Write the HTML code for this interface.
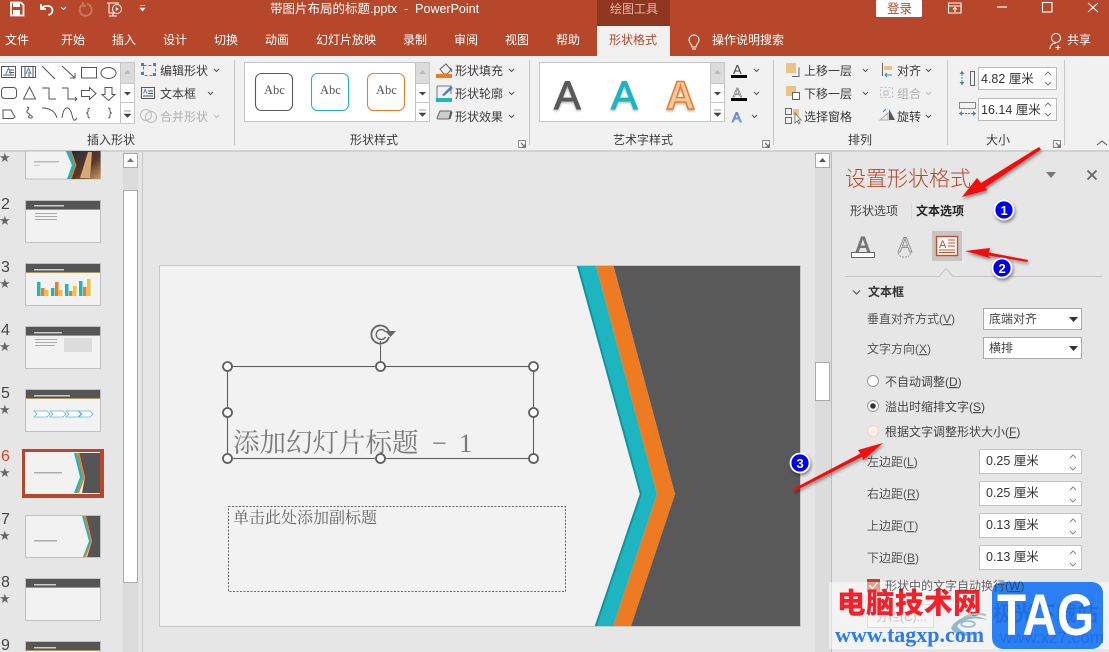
<!DOCTYPE html>
<html lang="zh"><head><meta charset="utf-8"><title>PowerPoint</title>
<style>
html,body{margin:0;padding:0;background:#e6e6e6;width:1109px;height:652px;overflow:hidden}
svg{display:block;position:absolute;left:0;top:0}
text{font-family:"Liberation Sans","Noto Sans CJK SC",sans-serif;font-size:12px;fill:#3a3a3a}
.w{fill:#fff}.g{fill:#b0b0b0}.p{fill:#555}
.ic{fill:none;stroke:#555;stroke-width:1}
.n{font-size:16px;fill:#444}
.s{font-family:"DejaVu Sans",sans-serif;font-size:13px;fill:#666}
</style></head><body>
<svg width="1109" height="652" viewBox="0 0 1109 652" xmlns="http://www.w3.org/2000/svg">
<defs>
<filter id="sh" x="-20%" y="-40%" width="140%" height="180%"><feDropShadow dx="1" dy="2" stdDeviation="1.5" flood-color="#000" flood-opacity=".45"/></filter>
<filter id="bl" x="-10%" y="-10%" width="120%" height="120%"><feDropShadow dx="0" dy="1.500" stdDeviation="1" flood-color="#000" flood-opacity=".3"/></filter>
<linearGradient id="ph" x1="0" x2="1" y1="0" y2="1"><stop offset="0" stop-color="#1c2a44"/><stop offset=".6" stop-color="#5a3a26"/><stop offset="1" stop-color="#c99a6a"/></linearGradient>
</defs>
<rect width="1109" height="652" fill="#e6e6e6"/>
<!-- title bar -->
<rect width="1109" height="56" fill="#b7472a"/>
<rect x="597" width="73" height="26" fill="#8f3620"/>
<rect x="597" y="26" width="73" height="30" fill="#f1f1f1"/>
<!-- QAT -->
<path d="M11 2.500h10l2.500 2.500v10.500h-12.500z" fill="none" stroke="#fff" stroke-width="1.800"/><rect x="13" y="3" width="7" height="4" fill="#fff"/><rect x="13" y="10" width="7" height="5" fill="#fff"/>
<path d="M41 4v5h5M41.500 8.500c3-4 11-3.500 11 2 0 2.500-2 4-4 4.500" fill="none" stroke="#fff" stroke-width="1.800"/>
<path d="M61 7l2.500 2.500L66 7" fill="none" stroke="#fff"/>
<path d="M83 4.500a6 6 0 1 0 4-.5M83 2v4h3" fill="none" stroke="#c97a63" stroke-width="1.800"/>
<path d="M107 3h12M109 3v10h8M113 13v3M109 16h8" fill="none" stroke="#fff"/><circle cx="117" cy="9" r="4.500" fill="#b7472a" stroke="#fff"/><path d="M115.800 7v4l3-2z" fill="#fff"/>
<path d="M140 5.500h5M140 8l2.500 3 2.500-3z" fill="#fff" stroke="#fff" stroke-width=".6"/>
<text x="270" y="13" class="w" style="font-size:12.500px">带图片布局的标题.pptx&#160;&#160;-&#160;&#160;PowerPoint</text>
<text x="610" y="13" style="font-size:12px;fill:#e6b9a8">绘图工具</text>
<rect x="876" y="0" width="46" height="17" fill="#fff" rx="1"/><text x="887" y="13" style="fill:#b7472a;font-size:12.500px">登录</text>
<path d="M948.500 3h12.500v10h-12.500zM948.500 6h12.500M955 12V8M953 9.500l2-2 2 2" fill="none" stroke="#fff" stroke-width="1.100"/>
<path d="M997 7h10" stroke="#fff" stroke-width="1.200"/>
<rect x="1042.500" y="2.500" width="9.500" height="9.500" fill="none" stroke="#fff" stroke-width="1.100"/>
<path d="M1088 3l10 9M1098 3l-10 9" stroke="#fff" stroke-width="1.100"/>
<!-- tabs -->
<g>
<text x="5" y="44" class="w">文件</text><text x="61" y="44" class="w">开始</text><text x="112" y="44" class="w">插入</text><text x="163" y="44" class="w">设计</text><text x="214" y="44" class="w">切换</text><text x="265" y="44" class="w">动画</text><text x="316" y="44" class="w">幻灯片放映</text><text x="403" y="44" class="w">录制</text><text x="454" y="44" class="w">审阅</text><text x="505" y="44" class="w">视图</text><text x="556" y="44" class="w">帮助</text>
<text x="609" y="44" style="fill:#b7472a">形状格式</text>
<path d="M692 47c0-3-3-3.500-3-7a5 5 0 0 1 10 0c0 3.500-3 4-3 7zM692 49h4" fill="none" stroke="#fff"/>
<text x="712" y="44" class="w">操作说明搜索</text>
<circle cx="1056" cy="38" r="4.500" fill="none" stroke="#fff"/><path d="M1050 49c0-4 3-6 6-6M1058 45v5M1055.500 47.500h5" fill="none" stroke="#fff"/>
<text x="1067" y="44" class="w">共享</text>
</g>
<!-- ribbon -->
<rect y="56" width="1109" height="94" fill="#f1f1f1"/>
<rect y="150" width="1109" height="2" fill="#d2d2d2"/>
<path d="M234.500 60v85M529.500 60v85M773.500 60v85M947.500 60v85M1064.500 60v85" stroke="#c6c6c6"/>
<!-- shapes gallery -->
<rect x="-2" y="62.500" width="136" height="61" fill="#fff" stroke="#c6c6c6"/>
<rect x="120.500" y="62.500" width="14" height="21" fill="#dcdcdc" stroke="#c6c6c6"/><rect x="120.500" y="83.500" width="14" height="19" fill="#fff" stroke="#c6c6c6"/><rect x="120.500" y="102.500" width="14" height="21" fill="#fff" stroke="#c6c6c6"/>
<path d="M124 74l3.500-4 3.500 4z" fill="#bbb"/><path d="M124 92l3.500 3.500 3.500-3.500z" fill="#444"/><path d="M124 111h7M124 114l3.500 3.500 3.500-3.500z" fill="#444" stroke="#444" stroke-width=".5"/>
<g class="ic">
<rect x="1.500" y="66.500" width="14" height="11"/><path d="M9 70h5M9 72.500h5M3 75h11"/>
<rect x="21.500" y="66.500" width="14" height="11"/><path d="M25 67v10M29 72v5M33 67v10"/>
<path d="M42 66l13 13M62 66l13 12M75 73v5h-5"/><rect x="81.500" y="67.500" width="15" height="10.500"/><ellipse cx="108.500" cy="73" rx="7.500" ry="5.500"/>
<rect x="1.500" y="87.500" width="15" height="11" rx="3"/><path d="M29.500 87l6 12h-12zM42 88h7v11h7M62 88h6v11h9M75 97l2 2-2 2M81.500 90.500h8v-3l6.500 6-6.500 6v-3h-8zM105 87.500h7v7h3l-6.500 6-6.500-6h3z"/>
<path d="M3 110h8l4 7-2 1.500h-10z"/><path d="M27 107c5 1-3 4 1 6s-2 4 2 5 2-3 0-3"/><path d="M42 108c8 0 13 3 15 10M62 118c2-14 8-12 10-3s4 4 5 3"/>
<path d="M90 108c-2 0-2 1-2 3s-1 2-2 2c1 0 2 0 2 2s0 3 2 3M108 108c2 0 2 1 2 3s1 2 2 2c-1 0-2 0-2 2s0 3-2 3"/>
</g>
<path d="M6 74l2.500-6 2.500 6M26 74l2.500-6 2.500 6" fill="none" stroke="#4a7ebb"/>
<!-- edit shape stack -->
<rect x="143.500" y="65.500" width="12" height="10" fill="none" stroke="#4a7ebb" stroke-dasharray="3 2"/><rect x="141" y="72" width="3" height="3" fill="#4a7ebb"/><rect x="153" y="63" width="3" height="3" fill="#4a7ebb"/><rect x="141" y="63" width="3" height="3" fill="#4a7ebb"/><rect x="153" y="73" width="3" height="3" fill="#4a7ebb"/>
<text x="160" y="75">编辑形状</text><path d="M214 69l2.500 2.500L219 69" class="ic"/>
<rect x="141.500" y="87.500" width="13" height="11" class="ic"/><path d="M148 91h5M148 93.500h5M143 96h10" class="ic"/><text x="143" y="93.500" style="font-size:6px;fill:#4a7ebb;font-weight:bold">A</text>
<text x="160" y="98">文本框</text><path d="M208 92l2.500 2.500L213 92" class="ic"/>
<circle cx="146" cy="115" r="5.500" fill="none" stroke="#bbb"/><circle cx="151" cy="117" r="5.500" fill="none" stroke="#bbb"/>
<text x="160" y="121" class="g">合并形状</text><path d="M214 115l2.500 2.500L219 115" fill="none" stroke="#bbb"/>
<text x="87" y="144">插入形状</text>
<!-- shape styles -->
<rect x="244.500" y="62.500" width="185" height="59" fill="#fff" stroke="#c6c6c6"/>
<rect x="415.500" y="62.500" width="14" height="21" fill="#dcdcdc" stroke="#c6c6c6"/><rect x="415.500" y="83.500" width="14" height="19" fill="#fff" stroke="#c6c6c6"/><rect x="415.500" y="102.500" width="14" height="19" fill="#fff" stroke="#c6c6c6"/>
<path d="M419 74l3.500-4 3.500 4z" fill="#bbb"/><path d="M419 92l3.500 3.500 3.500-3.500z" fill="#444"/><path d="M419 110h7M419 113l3.500 3.500 3.500-3.500z" fill="#444" stroke="#444" stroke-width=".5"/>
<rect x="255.500" y="73.500" width="37" height="37" rx="6" fill="#fff" stroke="#595959" stroke-width="1.100"/>
<rect x="311.500" y="73.500" width="37" height="37" rx="6" fill="#fff" stroke="#1db5c0" stroke-width="1.100"/>
<rect x="367.500" y="73.500" width="37" height="37" rx="6" fill="#fff" stroke="#ee7b22" stroke-width="1.100"/>
<text x="264" y="94" style="font-family:'Liberation Serif',serif;font-size:12.500px;fill:#555">Abc</text><text x="320" y="94" style="font-family:'Liberation Serif',serif;font-size:12.500px;fill:#555">Abc</text><text x="376" y="94" style="font-family:'Liberation Serif',serif;font-size:12.500px;fill:#555">Abc</text>
<path d="M440 69l6-5 5 6-4 4h-3zM450 68c2 1 2 3 1.500 4" fill="none" stroke="#666"/><rect x="436" y="74" width="16" height="4" fill="#ee7b22"/>
<text x="455" y="75">形状填充</text><path d="M509 69l2.500 2.500L514 69" class="ic"/>
<path d="M437 86h14v8M437 86v12" fill="none" stroke="#777"/><path d="M442 95l9-9 2 2-9 8z" fill="#4a7ebb"/><rect x="436" y="98" width="16" height="4" fill="#1db5c0"/>
<text x="455" y="98">形状轮廓</text><path d="M509 92l2.500 2.500L514 92" class="ic"/>
<path d="M437 118l3-7h11l-2 8h-11z" fill="#ccc" stroke="#666"/><path d="M449 119l2-8 1.500 1-2 7z" fill="#555"/>
<text x="455" y="121">形状效果</text><path d="M509 115l2.500 2.500L514 115" class="ic"/>
<text x="350" y="144">形状样式</text>
<rect x="518.500" y="140.500" width="7" height="7" fill="none" stroke="#888"/><path d="M521 143l4 4M525 144v3h-3" fill="none" stroke="#666"/>
<!-- wordart -->
<rect x="539.500" y="62.500" width="185" height="59" fill="#fff" stroke="#c6c6c6"/>
<rect x="710.500" y="62.500" width="14" height="21" fill="#dcdcdc" stroke="#c6c6c6"/><rect x="710.500" y="83.500" width="14" height="19" fill="#fff" stroke="#c6c6c6"/><rect x="710.500" y="102.500" width="14" height="19" fill="#fff" stroke="#c6c6c6"/>
<path d="M714 74l3.500-4 3.500 4z" fill="#bbb"/><path d="M714 92l3.500 3.500 3.500-3.500z" fill="#444"/><path d="M714 110h7M714 113l3.500 3.500 3.500-3.500z" fill="#444" stroke="#444" stroke-width=".5"/>
<text x="554" y="109" filter="url(#bl)" style="font-size:40px;fill:#595959;stroke:#595959;stroke-width:1px">A</text>
<text x="611" y="109" filter="url(#bl)" style="font-size:40px;fill:#1db5c0;stroke:#1db5c0;stroke-width:1px">A</text>
<text x="666" y="109" filter="url(#bl)" style="font-size:40px;font-weight:bold;fill:#f6c9a5;stroke:#ee7b22;stroke-width:1.500px" textLength="29" lengthAdjust="spacingAndGlyphs">A</text>
<text x="733" y="74" style="font-size:13px;fill:#444">A</text><rect x="731" y="75" width="16" height="3" fill="#000"/>
<text x="733" y="97" style="font-size:13px;fill:#fff;stroke:#666;stroke-width:.6px">A</text><rect x="731" y="98" width="16" height="3" fill="#000"/>
<text x="732" y="122" style="font-size:14px;fill:#dbe6f5;stroke:#4a7ebb;stroke-width:.8px">A</text>
<path d="M754 69l2.500 2.500L759 69M754 92l2.500 2.500L759 92M752 115l2.500 2.500L757 115" class="ic"/>
<text x="613" y="144">艺术字样式</text>
<rect x="762.500" y="140.500" width="7" height="7" fill="none" stroke="#888"/><path d="M765 143l4 4M769 144v3h-3" fill="none" stroke="#666"/>
<!-- arrange -->
<rect x="786" y="63" width="10" height="10" fill="#e8c487"/><path d="M792 76.500h7v-9" fill="none" stroke="#666"/>
<text x="804" y="75">上移一层</text><path d="M863 69l2.500 2.500L868 69" class="ic"/>
<rect x="786" y="86" width="10" height="10" fill="#e8c487"/><rect x="792.500" y="92.500" width="7" height="7" fill="#fff" stroke="#666"/>
<text x="804" y="98">下移一层</text><path d="M863 92l2.500 2.500L868 92" class="ic"/>
<rect x="785.500" y="108.500" width="6" height="6" fill="none" stroke="#666"/><rect x="785.500" y="117.500" width="6" height="6" fill="none" stroke="#666"/><rect x="793" y="109" width="6" height="6" fill="#e8c487"/><path d="M795 113v10l2-2 2 3 1-1-2-3h3z" fill="#fff" stroke="#666" stroke-width=".8"/>
<text x="804" y="121">选择窗格</text>
<path d="M882.500 63v13" stroke="#666"/><rect x="884" y="66" width="8" height="4" fill="#e8c487"/><path d="M892 75h-7M887 73l-2 2 2 2" fill="none" stroke="#4a7ebb"/>
<text x="897" y="75">对齐</text><path d="M926 69l2.500 2.500L931 69" class="ic"/>
<g fill="none" stroke="#bbb"><rect x="880.500" y="87.500" width="12" height="10" stroke-dasharray="2 2"/><path d="M884 91h4v4h-4z"/></g>
<text x="897" y="98" class="g">组合</text><path d="M926 92l2.500 2.500L931 92" fill="none" stroke="#bbb"/>
<path d="M880 120l8-7v7z" fill="#eee" stroke="#aaa"/><path d="M889 120v-11l6 11z" fill="#555"/><path d="M883 112l3-3" stroke="#4a7ebb"/>
<text x="897" y="121">旋转</text><path d="M926 115l2.500 2.500L931 115" class="ic"/>
<text x="848" y="144">排列</text>
<rect x="1053.500" y="140.500" width="7" height="7" fill="none" stroke="#888"/><path d="M1056 143l4 4M1060 144v3h-3" fill="none" stroke="#666"/>
<!-- size -->
<rect x="970.500" y="71.500" width="4" height="14" fill="none" stroke="#666"/><path d="M962 71v14" stroke="#4a7ebb" stroke-dasharray="2 1"/><path d="M959.500 74l2.500-3 2.500 3zM959.500 82l2.500 3 2.500-3z" fill="#4a7ebb"/>
<rect x="978.500" y="67.500" width="78" height="22" fill="#fff" stroke="#bbb"/>
<text x="981" y="83" style="font-size:12.500px;fill:#333">4.82 厘米</text>
<path d="M1045 75l3-3 3 3M1045 82l3 3 3-3" fill="none" stroke="#777"/>
<rect x="959.500" y="102.500" width="16" height="6" fill="none" stroke="#888"/><path d="M959 113.500h17" stroke="#4a7ebb" stroke-dasharray="2 1"/><path d="M962 111l-3 2.500 3 2.500zM973 111l3 2.500-3 2.500z" fill="#4a7ebb"/>
<rect x="978.500" y="98.500" width="78" height="22" fill="#fff" stroke="#bbb"/>
<text x="981" y="114" style="font-size:12.500px;fill:#333">16.14 厘米</text>
<path d="M1045 106l3-3 3 3M1045 113l3 3 3-3" fill="none" stroke="#777"/>
<text x="986" y="144">大小</text>
<path d="M1097 145l5-4 5 4" fill="none" stroke="#555"/>
<!-- left panel -->
<rect x="123" y="152" width="15" height="500" fill="#dcdcdc"/>
<rect x="123.500" y="153.500" width="14" height="14" fill="#fff" stroke="#aaa"/><path d="M127 162l3.500-4 3.500 4z" fill="#777"/>
<rect x="123.500" y="190.500" width="14" height="392" fill="#fff" stroke="#aaa"/>
<path d="M142.500 152v500" stroke="#c8c8c8"/>
<!-- thumbnails -->
<g>
<rect x="25.500" y="151" width="75" height="28" fill="#f2f2f2" stroke="#c0c0c0"/>
<path d="M66 151h34.500v28H68l4-14z" fill="url(#ph)"/><path d="M80 178l8-26h4l-2 26z" fill="#d9a877"/><path d="M66 151h4l5 14-5 14h-3l5-14z" fill="#1db5c0"/><path d="M70 151h1.500l5 14-5 14H70l5-14z" fill="#ee7b22"/>
<rect x="34" y="161" width="25" height="1.500" fill="#bbb"/><rect x="34" y="165" width="6" height="1" fill="#ccc"/>

<rect x="25.500" y="200.500" width="75" height="42" fill="#f2f2f2" stroke="#c0c0c0"/><rect x="26" y="201" width="74" height="8" fill="#555"/><rect x="26" y="209" width="74" height="1" fill="#a89a5e"/><rect x="34" y="205" width="30" height="1.500" fill="#ccc"/>
<rect x="35" y="213" width="22" height="1" fill="#aaa"/><rect x="35" y="216" width="22" height="1" fill="#aaa"/><rect x="35" y="219" width="22" height="1" fill="#aaa"/>

<rect x="25.500" y="263.500" width="75" height="42" fill="#f2f2f2" stroke="#c0c0c0"/><rect x="26" y="264" width="74" height="8" fill="#555"/><rect x="26" y="272" width="74" height="1" fill="#a89a5e"/><rect x="34" y="269" width="30" height="1.500" fill="#ccc"/>
<rect x="37" y="282" width="3.500" height="14" fill="#1db5c0"/><rect x="41" y="288" width="3.500" height="8" fill="#ee7b22"/><rect x="45" y="290" width="3.500" height="6" fill="#f2c230"/>
<rect x="51" y="288" width="3.500" height="8" fill="#1db5c0"/><rect x="55" y="282" width="3.500" height="14" fill="#ee7b22"/><rect x="59" y="290" width="3.500" height="6" fill="#f2c230"/>
<rect x="65" y="284" width="3.500" height="12" fill="#1db5c0"/><rect x="69" y="291" width="3.500" height="5" fill="#ee7b22"/><rect x="73" y="286" width="3.500" height="10" fill="#f2c230"/>
<rect x="79" y="281" width="3.500" height="15" fill="#1db5c0"/><rect x="83" y="287" width="3.500" height="9" fill="#ee7b22"/><rect x="87" y="279" width="3.500" height="17" fill="#f2c230"/>

<rect x="25.500" y="326.500" width="75" height="42" fill="#f2f2f2" stroke="#c0c0c0"/><rect x="26" y="327" width="74" height="8" fill="#555"/><rect x="26" y="335" width="74" height="1" fill="#a89a5e"/><rect x="34" y="332" width="28" height="1.500" fill="#ccc"/>
<rect x="35" y="339" width="22" height="1" fill="#aaa"/><rect x="35" y="342" width="22" height="1" fill="#aaa"/><rect x="35" y="345" width="20" height="1" fill="#aaa"/><rect x="64" y="338" width="28" height="14" fill="#dcdcdc"/>

<rect x="25.500" y="389.500" width="75" height="42" fill="#f2f2f2" stroke="#c0c0c0"/><rect x="26" y="390" width="74" height="8" fill="#555"/><rect x="26" y="398" width="74" height="1" fill="#a89a5e"/><rect x="34" y="395" width="36" height="1.500" fill="#ccc"/>
<path d="M34 411h13l3 3-3 3H34l3-3zM50 411h13l3 3-3 3H50l3-3zM66 411h13l3 3-3 3H66l3-3zM78 411h12l3 3-3 3H78l3-3z" fill="#fff" stroke="#5bbfc6" stroke-width=".8"/>

<rect x="22" y="449" width="82" height="49" fill="#b7472a"/><rect x="25" y="452" width="75" height="42" fill="#f2f2f2"/>
<path d="M79 453h21v40H82l3-16z" fill="#555"/><path d="M74 453h3l6 24-6 16h-3l6-16z" fill="#1db5c0"/><path d="M77 453h2.500l5.500 24-6 16H77l6-16z" fill="#ee7b22"/>
<rect x="34" y="472" width="28" height="1.500" fill="#aaa"/>

<rect x="25.500" y="515.500" width="75" height="42" fill="#f2f2f2" stroke="#c0c0c0"/>
<path d="M86 516h14v41H87l5-16z" fill="#555"/><path d="M82 516h2l7 25-6 16h-2l6-16z" fill="#1db5c0"/><path d="M84 516h2l6 25-6 16h-2l7-16z" fill="#ee7b22"/>
<rect x="34" y="540" width="23" height="1.500" fill="#aaa"/>

<rect x="25.500" y="578.500" width="75" height="42" fill="#f2f2f2" stroke="#c0c0c0"/><rect x="26" y="579" width="74" height="8" fill="#555"/><rect x="26" y="587" width="74" height="1" fill="#a89a5e"/><rect x="34" y="584" width="22" height="1.500" fill="#ccc"/>
<rect x="25.500" y="641.500" width="75" height="14" fill="#f2f2f2" stroke="#c0c0c0"/><rect x="26" y="642" width="74" height="8" fill="#555"/><rect x="26" y="650" width="74" height="1" fill="#a89a5e"/><rect x="34" y="647" width="22" height="1.500" fill="#ccc"/>
</g>
<g>
<text x="1" y="209" class="n">2</text><text x="1" y="272" class="n">3</text><text x="1" y="335" class="n">4</text><text x="1" y="398" class="n">5</text><text x="1" y="461" class="n" style="fill:#d24726">6</text><text x="1" y="524" class="n">7</text><text x="1" y="587" class="n">8</text><text x="1" y="650" class="n">9</text>
<text x="-1" y="162" class="s">★</text><text x="-1" y="225" class="s">★</text><text x="-1" y="288" class="s">★</text><text x="-1" y="351" class="s">★</text><text x="-1" y="414" class="s">★</text><text x="-1" y="477" class="s">★</text><text x="-1" y="540" class="s">★</text><text x="-1" y="603" class="s">★</text>
</g>
<!-- slide -->
<rect x="159.500" y="265.500" width="641" height="361" fill="#f2f2f2" stroke="#c8c8c8"/>
<path d="M613.500 266H800v360H631l44-132z" fill="#595959"/>
<path d="M596 266h17.500L675 494l-44 132h-18l44-132z" fill="#ee7b22"/>
<path d="M577 266h19l61 228-44 132h-18l45-132z" fill="#1db5c0"/>
<path d="M578 266l62.800 228-45 132" fill="none" stroke="#15939d" stroke-width="2"/>
<!-- selection -->
<path d="M380.500 341v25" stroke="#5f5f5f" stroke-width="1"/>
<rect x="227.500" y="366.500" width="306" height="92" fill="none" stroke="#5f5f5f" stroke-width="1.100"/>
<text x="233" y="452" style="font-family:'Noto Serif CJK SC','Liberation Serif',serif;font-size:26.500px;fill:#7a7a7a">添加幻灯片标题<tspan x="432" style="font-family:'Liberation Serif',serif">−</tspan><tspan x="459" style="font-family:'Liberation Serif',serif">1</tspan></text>
<g fill="#fff" stroke="#5f5f5f" stroke-width="1.800"><circle cx="227.500" cy="366.500" r="4.500"/><circle cx="380.500" cy="366.500" r="4.500"/><circle cx="533.500" cy="366.500" r="4.500"/><circle cx="227.500" cy="412.500" r="4.500"/><circle cx="533.500" cy="412.500" r="4.500"/><circle cx="227.500" cy="458.500" r="4.500"/><circle cx="380.500" cy="458.500" r="4.500"/><circle cx="533.500" cy="458.500" r="4.500"/></g>
<path d="M389 332a9 9 0 1 0 0 5" fill="none" stroke="#666" stroke-width="1.800"/><path d="M385.500 332a5 5 0 1 0 0 5" fill="none" stroke="#666" stroke-width="1.400"/><path d="M385 331h11l-5.500 6z" fill="#666"/>
<rect x="228.500" y="506.500" width="337" height="85" fill="none" stroke="#666" stroke-dasharray="2 1.500"/>
<text x="233" y="523" style="font-family:'Noto Serif CJK SC','Liberation Sans',serif;font-size:16px;fill:#666">单击此处添加副标题</text>
<!-- right scrollbar -->
<rect x="815" y="152" width="16" height="500" fill="#dcdcdc"/>
<rect x="815.500" y="153.500" width="14" height="14" fill="#fff" stroke="#aaa"/><path d="M819 162l3.500-4 3.500 4z" fill="#555"/>
<rect x="815.500" y="362.500" width="14" height="38" fill="#fff" stroke="#aaa"/>
<path d="M831.500 152v500" stroke="#bdbdbd"/>
<!-- format panel -->
<rect x="832" y="152" width="277" height="500" fill="#e6e6e6"/>
<text x="845" y="186" style="font-size:21px;font-weight:300;fill:#b7472a">设置形状格式</text>
<path d="M1046 172h10l-5 6z" fill="#777"/>
<path d="M1087.500 170.500l9 9M1096.500 170.500l-9 9" stroke="#666" stroke-width="1.800"/>
<text x="850" y="215" style="fill:#444">形状选项</text>
<path d="M911.500 203v17" stroke="#d8d8d8"/>
<text x="916" y="215" style="fill:#222;font-weight:bold">文本选项</text>
<text x="855" y="252" style="font-size:22px;font-weight:bold;fill:#777">A</text>
<rect x="851.500" y="252.500" width="23" height="5" fill="#fff" stroke="#666"/>
<text x="898" y="252" style="font-size:21px;fill:#f4f4f4;stroke:#888;stroke-width:.9px">A</text>
<path d="M898 253l3 4h7l3-4" fill="none" stroke="#999" stroke-dasharray="2 1"/>
<rect x="932" y="231" width="30" height="30" fill="#c5c5c5"/>
<rect x="936.500" y="236.500" width="21" height="19" fill="#fff" stroke="#d24726" stroke-width="1.400"/>
<text x="939" y="248" style="font-size:11px;fill:#d24726">A</text><path d="M948 240h7M948 243h7M948 246h7M939 250h16M939 252.500h16" stroke="#d24726" stroke-width="1" fill="none"/>
<path d="M845 276.500h94l7-8 7 8h149" fill="none" stroke="#c4c4c4"/>
<path d="M853 290.500l3.500 3.500 3.500-3.500" fill="none" stroke="#555" stroke-width="1.200"/>
<text x="868" y="296" style="fill:#333;font-weight:bold">文本框</text>
<text x="867" y="323" style="fill:#555">垂直对齐方式(<tspan text-decoration="underline">V</tspan>)</text>
<rect x="983.500" y="308.500" width="98" height="21" fill="#fff" stroke="#aaa"/><text x="989" y="323" style="fill:#444">底端对齐</text><path d="M1069 317h9l-4.500 5z" fill="#333"/>
<text x="867" y="353" style="fill:#555">文字方向(<tspan text-decoration="underline">X</tspan>)</text>
<rect x="983.500" y="337.500" width="98" height="21" fill="#fff" stroke="#aaa"/><text x="989" y="352" style="fill:#444">横排</text><path d="M1069 346h9l-4.500 5z" fill="#333"/>
<circle cx="873" cy="381" r="5.500" fill="#fff" stroke="#999"/>
<text x="885" y="386" style="fill:#444">不自动调整(<tspan text-decoration="underline">D</tspan>)</text>
<circle cx="873" cy="406" r="5.500" fill="#fff" stroke="#999"/><circle cx="873" cy="406" r="2.800" fill="#333"/>
<text x="885" y="411" style="fill:#444">溢出时缩排文字(<tspan text-decoration="underline">S</tspan>)</text>
<circle cx="873" cy="431" r="5.500" fill="#fdeee9" stroke="#f3d3c8"/>
<text x="885" y="436" style="fill:#444">根据文字调整形状大小(<tspan text-decoration="underline">F</tspan>)</text>
<g>
<text x="867" y="466" style="fill:#555">左边距(<tspan text-decoration="underline">L</tspan>)</text><rect x="979.500" y="449.500" width="102" height="24" fill="#fff" stroke="#c4c4c4"/><text x="986" y="465" style="font-size:12.500px;fill:#333">0.25 厘米</text><path d="M1070 458l3-3 3 3M1070 467l3 3 3-3" fill="none" stroke="#888"/>
<text x="867" y="498" style="fill:#555">右边距(<tspan text-decoration="underline">R</tspan>)</text><rect x="979.500" y="481.500" width="102" height="24" fill="#fff" stroke="#c4c4c4"/><text x="986" y="497" style="font-size:12.500px;fill:#333">0.25 厘米</text><path d="M1070 490l3-3 3 3M1070 499l3 3 3-3" fill="none" stroke="#888"/>
<text x="867" y="530" style="fill:#555">上边距(<tspan text-decoration="underline">T</tspan>)</text><rect x="979.500" y="513.500" width="102" height="24" fill="#fff" stroke="#c4c4c4"/><text x="986" y="529" style="font-size:12.500px;fill:#333">0.13 厘米</text><path d="M1070 522l3-3 3 3M1070 531l3 3 3-3" fill="none" stroke="#888"/>
<text x="867" y="562" style="fill:#555">下边距(<tspan text-decoration="underline">B</tspan>)</text><rect x="979.500" y="545.500" width="102" height="24" fill="#fff" stroke="#c4c4c4"/><text x="986" y="561" style="font-size:12.500px;fill:#333">0.13 厘米</text><path d="M1070 554l3-3 3 3M1070 563l3 3 3-3" fill="none" stroke="#888"/>
</g>
<rect x="867" y="579" width="13" height="13" fill="#b7472a"/><path d="M869.500 585.500l3 3 5-6" fill="none" stroke="#fff" stroke-width="1.300"/>
<rect x="867.500" y="604.500" width="66" height="23" fill="#eee" stroke="#bbb"/><text x="876" y="621" style="fill:#888">分栏(C)...</text>
<!-- watermark -->
<rect x="829" y="582" width="280" height="67" fill="#fff" fill-opacity=".5"/>
<text x="837" y="613" style="font-size:28.500px;font-weight:900;fill:#f5202a;letter-spacing:.5px">电脑技术网</text>
<path d="M951 628c6-12 24-15 36-8-10-3-24-2-30 6 6 9 20 9 26 3-5 8-27 10-32-1z" fill="#8fb8cf"/><path d="M962 619c6-5 16-6 24-4" fill="none" stroke="#a9c9a8" stroke-width="2"/><ellipse cx="968" cy="624" rx="7" ry="3" fill="none" stroke="#8fb8cf" stroke-width="1.500"/>
<text x="835" y="642" style="font-family:'Liberation Serif',serif;font-size:22px;font-weight:bold;fill:#2a7cf2">www.tagxp.com</text>
<rect x="992" y="582" width="111" height="67" rx="11" fill="#2a7ff5"/>
<text x="993" y="621" style="font-size:21px;font-weight:bold;fill:#1f6de0">极光下载站</text>
<text x="1000" y="643" style="font-size:17px;fill:#1f6de0">www.xz7.com</text>
<text x="997" y="635" style="font-size:58px;font-weight:bold;fill:#fff" textLength="97" lengthAdjust="spacingAndGlyphs">TAG</text>
<text x="885" y="590" style="fill:#333;fill-opacity:.75">形状中的文字自动换行(<tspan text-decoration="underline">W</tspan>)</text>
<!-- annotations -->
<g filter="url(#sh)" fill="#f20d0d">
<path d="M962 197L977 178L981 183L1039 147L1041 149.500L985 187.500L987.500 190z"/>
<path d="M965 251L990 248L989 252.500L1028 260L1027.500 262L988.500 255.500L990 258z"/>
<path d="M883 443L858 450L860.500 453.500L793 489L794 491.500L862.500 456.500L863 460z"/>
</g>
<g filter="url(#sh)">
<circle cx="1004" cy="210" r="9.500" fill="#0000f0" stroke="#fff" stroke-width="1.800"/>
<circle cx="1002" cy="268" r="9.500" fill="#0000f0" stroke="#fff" stroke-width="1.800"/>
<circle cx="800" cy="463" r="9.500" fill="#0000f0" stroke="#fff" stroke-width="1.800"/>
</g>
<text x="1000.500" y="215" style="font-size:13px;font-weight:bold;fill:#fff">1</text>
<text x="998.500" y="273" style="font-size:13px;font-weight:bold;fill:#fff">2</text>
<text x="796.500" y="468" style="font-size:13px;font-weight:bold;fill:#fff">3</text>
</svg>
</body></html>
